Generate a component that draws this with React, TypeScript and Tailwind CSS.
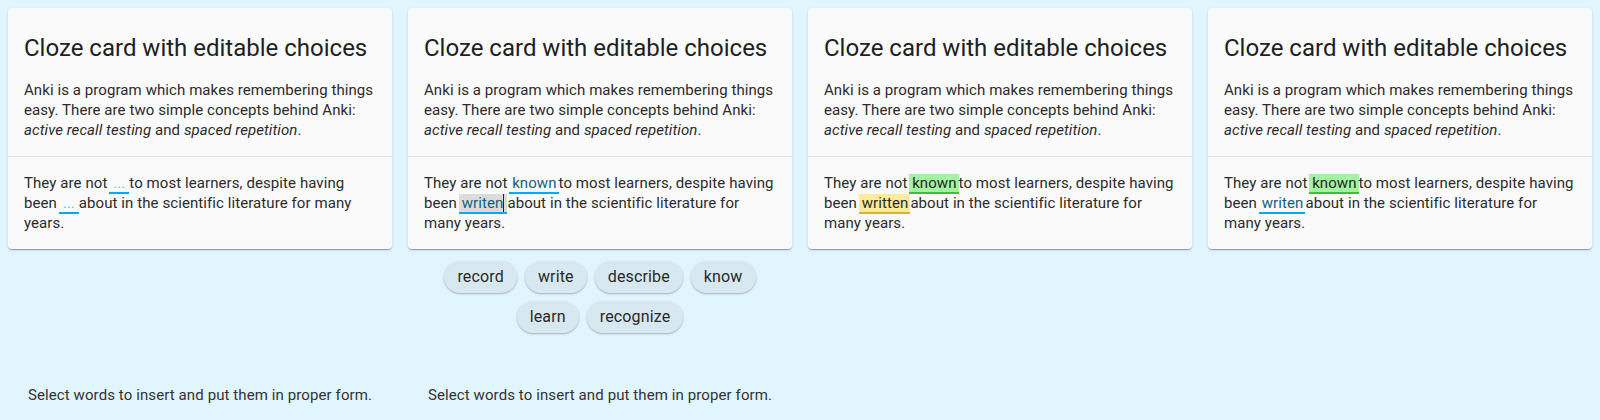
import React from "react";

type BlankKind = "empty" | "filled" | "focused" | "correct" | "partial";

function Blank({ kind, text }: { kind: BlankKind; text: string }) {
  if (kind === "empty") {
    return (
      <span className="-ml-[2px] border-b-2 border-[#03a9f4] pl-[4px] pr-[4px] text-[#4fc3f7]">{text}</span>
    );
  }
  if (kind === "filled") {
    return (
      <span className="-ml-[2px] border-b-2 border-[#03a9f4] pl-[3px] pr-[2px] text-[#165e7d]">{text}</span>
    );
  }
  if (kind === "focused") {
    return (
      <span className="-ml-[2px] border-b-2 border-[#03a9f4] bg-[#dcdcdc] pl-[3px] pr-[3px] text-[#165e7d]">
        {text}
        <span className="inline-block h-[18px] w-px bg-[#222] align-[-4px]" />
      </span>
    );
  }
  if (kind === "correct") {
    return (
      <span className="-ml-[2px] border-b-2 border-[#3cbf3c] bg-[#a3f3a3] pl-[3px] pr-[2px] text-[#1f2a1f]">{text}</span>
    );
  }
  return (
    <span className="-ml-[2px] border-b-2 border-[#d1b340] bg-[#fdeb99] pl-[3px] pr-[2px] text-[#2b2a1f]">{text}</span>
  );
}

function Card({ b1, b2 }: { b1: React.ReactNode; b2: React.ReactNode }) {
  return (
    <div className="rounded-[4px] bg-[#fafafa] shadow-[0_2px_1px_-1px_rgba(0,0,0,0.2),0_1px_1px_0_rgba(0,0,0,0.14),0_1px_3px_0_rgba(0,0,0,0.12)]">
      <div className="px-4 pb-4 pt-6">
        <h2 className="text-[24px] font-normal leading-[32px] text-[#212121]">Cloze card with editable choices</h2>
        <p className="mt-4 text-[15px] leading-[20px] tracking-[0.08px] text-[#2b2b2b]">
          Anki is a program which makes remembering things easy. There are two simple concepts behind Anki:{" "}
          <em>active recall testing</em> and <em>spaced repetition</em>.
        </p>
      </div>
      <div className="h-px bg-[#d8e5eb]" />
      <div className="px-4 py-4">
        <p className="text-[15px] leading-[20px] tracking-[0.08px] text-[#2b2b2b]">
          They are not {b1}to most learners, despite having been {b2}about in the scientific literature for many years.
        </p>
      </div>
    </div>
  );
}

function Chip({ label }: { label: string }) {
  return (
    <div className="flex h-8 items-center rounded-full bg-[#d8e8f0] px-[13px] text-[16px] tracking-[0.15px] text-[#2a2a2a] shadow-[0_1px_2px_rgba(0,0,0,0.28)]">
      {label}
    </div>
  );
}

function Hint() {
  return (
    <div className="mb-[15px] mt-auto text-center text-[15px] leading-[20px] tracking-[0.1px] text-[#333]">
      Select words to insert and put them in proper form.
    </div>
  );
}

export default function App() {
  const chips = ["record", "write", "describe", "know", "learn", "recognize"];
  return (
    <div className="flex min-h-screen w-full bg-[#e1f5fe] font-['Roboto',sans-serif]">
      <div className="flex h-[420px] w-[400px] flex-col px-2 pt-2">
        <Card b1={<Blank kind="empty" text="..." />} b2={<Blank kind="empty" text="..." />} />
        <Hint />
      </div>
      <div className="flex h-[420px] w-[400px] flex-col px-2 pt-2">
        <Card b1={<Blank kind="filled" text="known" />} b2={<Blank kind="focused" text="writen" />} />
        <div className="mt-3 flex flex-wrap justify-center gap-2 px-4">
          {chips.map((c) => (
            <Chip key={c} label={c} />
          ))}
        </div>
        <Hint />
      </div>
      <div className="flex h-[420px] w-[400px] flex-col px-2 pt-2">
        <Card b1={<Blank kind="correct" text="known" />} b2={<Blank kind="partial" text="written" />} />
      </div>
      <div className="flex h-[420px] w-[400px] flex-col px-2 pt-2">
        <Card b1={<Blank kind="correct" text="known" />} b2={<Blank kind="filled" text="writen" />} />
      </div>
    </div>
  );
}
